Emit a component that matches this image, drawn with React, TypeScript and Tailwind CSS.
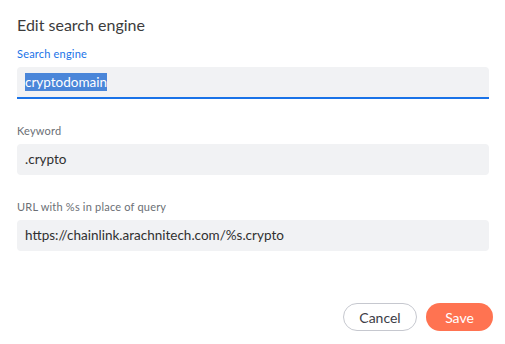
export default function App() {
  const font = { fontFamily: 'Lato, "Noto Sans", sans-serif' };
  return (
    <div className="w-[505px] h-[344px] bg-white text-[#202124] flex flex-col px-[17px] pt-[14px]" style={font}>
      <div className="text-[16px] leading-[22px] text-[#3c3c3c]">Edit search engine</div>
      <div className="mt-[11px] text-[11px] tracking-[0.2px] leading-[14px] text-[#1a73e8]">Search engine</div>
      <div className="mt-[6px] h-[32px] w-[472px] bg-[#f1f2f4] rounded-t-[4px] border-b-2 border-[#1a73e8] flex items-center pl-[8px]">
        <span className="text-[13.5px] leading-[18px] bg-[#4a86d9] text-white">cryptodomain</span>
      </div>
      <div className="mt-[25px] text-[11px] tracking-[0.2px] leading-[14px] text-[#6b6f75]">Keyword</div>
      <div className="mt-[6px] h-[31px] w-[472px] bg-[#f1f2f4] rounded-[4px] flex items-center pl-[8px] text-[13.5px] text-[#303030]">.crypto</div>
      <div className="mt-[25px] text-[11px] tracking-[0.2px] leading-[14px] text-[#6b6f75]">URL with %s in place of query</div>
      <div className="mt-[6px] h-[31px] w-[472px] bg-[#f1f2f4] rounded-[4px] flex items-center pl-[8px] text-[13.5px] text-[#303030]">https://chainlink.arachnitech.com/%s.crypto</div>
      <div className="mt-[52px] flex justify-end gap-[9px] w-[476px]">
        <button className="h-[28px] w-[74px] rounded-full border border-[#c6c8cf] text-[14px] text-[#3c3c46] bg-white">Cancel</button>
        <button className="h-[28px] w-[67px] rounded-full bg-[#ff7351] text-[14px] text-white">Save</button>
      </div>
    </div>
  );
}
